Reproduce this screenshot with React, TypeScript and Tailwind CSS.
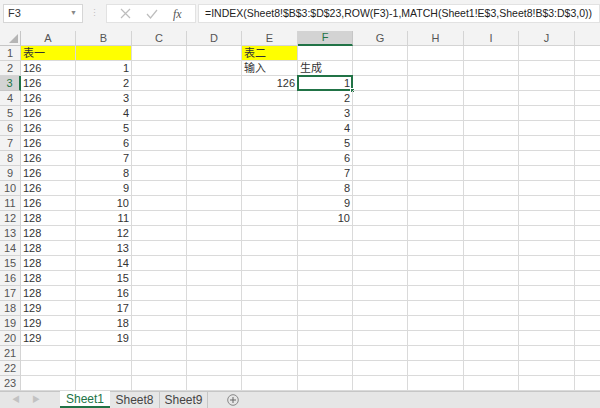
import * as React from "react";

const colWidths = [55, 56, 55, 55, 56, 55, 55, 56, 55, 56, 55];
const colNames = ["A", "B", "C", "D", "E", "F", "G", "H", "I", "J", "K"];

type Cell = { text: string; align?: "left" | "right"; yellow?: boolean };

function buildData(): Record<string, Cell> {
  const data: Record<string, Cell> = {};
  data["A1"] = { text: "表一", yellow: true };
  data["B1"] = { text: "", yellow: true };
  data["E1"] = { text: "表二", yellow: true };
  data["E2"] = { text: "输入" };
  data["F2"] = { text: "生成" };
  data["E3"] = { text: "126", align: "right" };
  for (let r = 2; r <= 20; r++) {
    const v = r <= 11 ? "126" : r <= 17 ? "128" : "129";
    data[`A${r}`] = { text: v };
    data[`B${r}`] = { text: String(r - 1), align: "right" };
  }
  for (let i = 1; i <= 10; i++) {
    data[`F${i + 2}`] = { text: String(i), align: "right" };
  }
  return data;
}

const font = { fontFamily: '"Liberation Sans", "Noto Sans CJK SC", sans-serif' };

function FormulaBar() {
  return (
    <div className="flex h-[31px] items-start bg-[#f3f3f3] pt-[4px]" style={font}>
      <div className="ml-[3px] flex h-[19px] w-[80px] shrink-0 items-center justify-between border border-[#d6d6d6] bg-white pl-[4px] pr-[5px] text-[11px] text-[#333]">
        <span>F3</span>
        <span className="text-[7px] text-[#888]">▼</span>
      </div>
      <div className="flex h-[19px] w-[23px] shrink-0 items-center justify-center text-[9px] text-[#c0c0c0]">⋮</div>
      <div className="flex h-[19px] w-[90px] shrink-0 items-center justify-around border border-[#e2e2e2] bg-white px-[6px]">
        <svg width="11" height="11" viewBox="0 0 11 11">
          <path d="M1 1 L10 10 M10 1 L1 10" stroke="#bdbdbd" strokeWidth="1.2" />
        </svg>
        <svg width="12" height="10" viewBox="0 0 12 10">
          <path d="M1 5 L4.5 9 L11 1" stroke="#bdbdbd" strokeWidth="1.2" fill="none" />
        </svg>
        <span className="text-[12px] italic text-[#555]" style={{ fontFamily: '"Liberation Serif", serif' }}>
          fx
        </span>
      </div>
      <div className="ml-[2px] flex h-[19px] min-w-0 flex-1 items-center overflow-hidden whitespace-nowrap border border-[#e2e2e2] bg-white pl-[6px] text-[10.5px] text-[#222]">
        =INDEX(Sheet8!$B$3:$D$23,ROW(F3)-1,MATCH(Sheet1!E$3,Sheet8!B$3:D$3,0))
      </div>
    </div>
  );
}

function Grid() {
  const data = buildData();
  const rows = Array.from({ length: 23 }, (_, i) => i + 1);
  const template = `21px ${colWidths.map((w) => `${w}px`).join(" ")}`;
  return (
    <div className="overflow-hidden">
      <div
        className="grid w-max bg-white text-[11px] text-[#333]"
        style={{ ...font, gridTemplateColumns: template, gridAutoRows: "15px" }}
      >
        {/* corner */}
        <div className="relative border-b border-r border-[#c6c6c6] bg-[#f3f3f3]">
          <div className="absolute bottom-[2px] right-[2px] h-0 w-0 border-b-[9px] border-l-[9px] border-b-[#b5b5b5] border-l-transparent" />
        </div>
        {colNames.map((c) =>
          c === "F" ? (
            <div
              key={c}
              className="flex items-center justify-center border-b-2 border-r border-b-[#217346] border-r-[#c6c6c6] bg-[#d3d3d3] text-[#217346]"
            >
              {c}
            </div>
          ) : (
            <div
              key={c}
              className="flex items-center justify-center border-b border-r border-[#d4d4d4] bg-[#f3f3f3] text-[#555]"
            >
              {c === "K" ? "" : c}
            </div>
          )
        )}
        {rows.map((r) => (
          <React.Fragment key={r}>
            {r === 3 ? (
              <div className="flex items-center justify-center border-b border-r-2 border-b-[#c6c6c6] border-r-[#217346] bg-[#d3d3d3] text-[#217346]">
                {r}
              </div>
            ) : (
              <div className="flex items-center justify-center border-b border-r border-[#d4d4d4] bg-[#f3f3f3] text-[#555]">
                {r}
              </div>
            )}
            {colNames.map((c) => {
              const cell = data[`${c}${r}`];
              const selected = c === "F" && r === 3;
              return (
                <div
                  key={c}
                  className={`relative flex items-center overflow-visible whitespace-nowrap border-b border-r border-[#dadada] px-[2px] leading-none ${
                    cell?.align === "right" ? "justify-end" : "justify-start"
                  } ${cell?.yellow ? "bg-[#ffff00]" : ""}`}
                >
                  {cell?.text}
                  {selected && (
                    <>
                      <div className="pointer-events-none absolute -left-px -top-px bottom-[-1px] right-[-1px] border-2 border-[#217346]" />
                      <div className="absolute bottom-[-3px] right-[-3px] h-[5px] w-[5px] border border-white bg-[#217346]" />
                    </>
                  )}
                </div>
              );
            })}
          </React.Fragment>
        ))}
      </div>
    </div>
  );
}

function SheetTabs() {
  return (
    <div
      className="flex h-[17px] items-stretch border-t border-[#c6c6c6] bg-[#e6e6e6] text-[12px]"
      style={font}
    >
      <div className="flex w-[60px] items-center gap-[12px] pl-[12px] text-[8px] text-[#c2c2c2]">
        <span>◀</span>
        <span>▶</span>
      </div>
      <div className="-mt-px flex w-[50px] items-center justify-center border-b-2 border-[#217346] bg-white text-[#217346]">
        Sheet1
      </div>
      <div className="flex w-[50px] items-center justify-center border-r border-[#c6c6c6] text-[#444]">Sheet8</div>
      <div className="flex w-[48px] items-center justify-center border-r border-[#c6c6c6] text-[#444]">Sheet9</div>
      <div className="flex w-[50px] items-center justify-center">
        <svg width="12" height="12" viewBox="0 0 12 12">
          <circle cx="6" cy="6" r="5.3" stroke="#888" strokeWidth="1" fill="none" />
          <path d="M6 3 V9 M3 6 H9" stroke="#666" strokeWidth="1" />
        </svg>
      </div>
    </div>
  );
}

export default function App() {
  return (
    <div className="h-[408px] w-[600px] overflow-hidden bg-white">
      <FormulaBar />
      <Grid />
      <SheetTabs />
    </div>
  );
}
